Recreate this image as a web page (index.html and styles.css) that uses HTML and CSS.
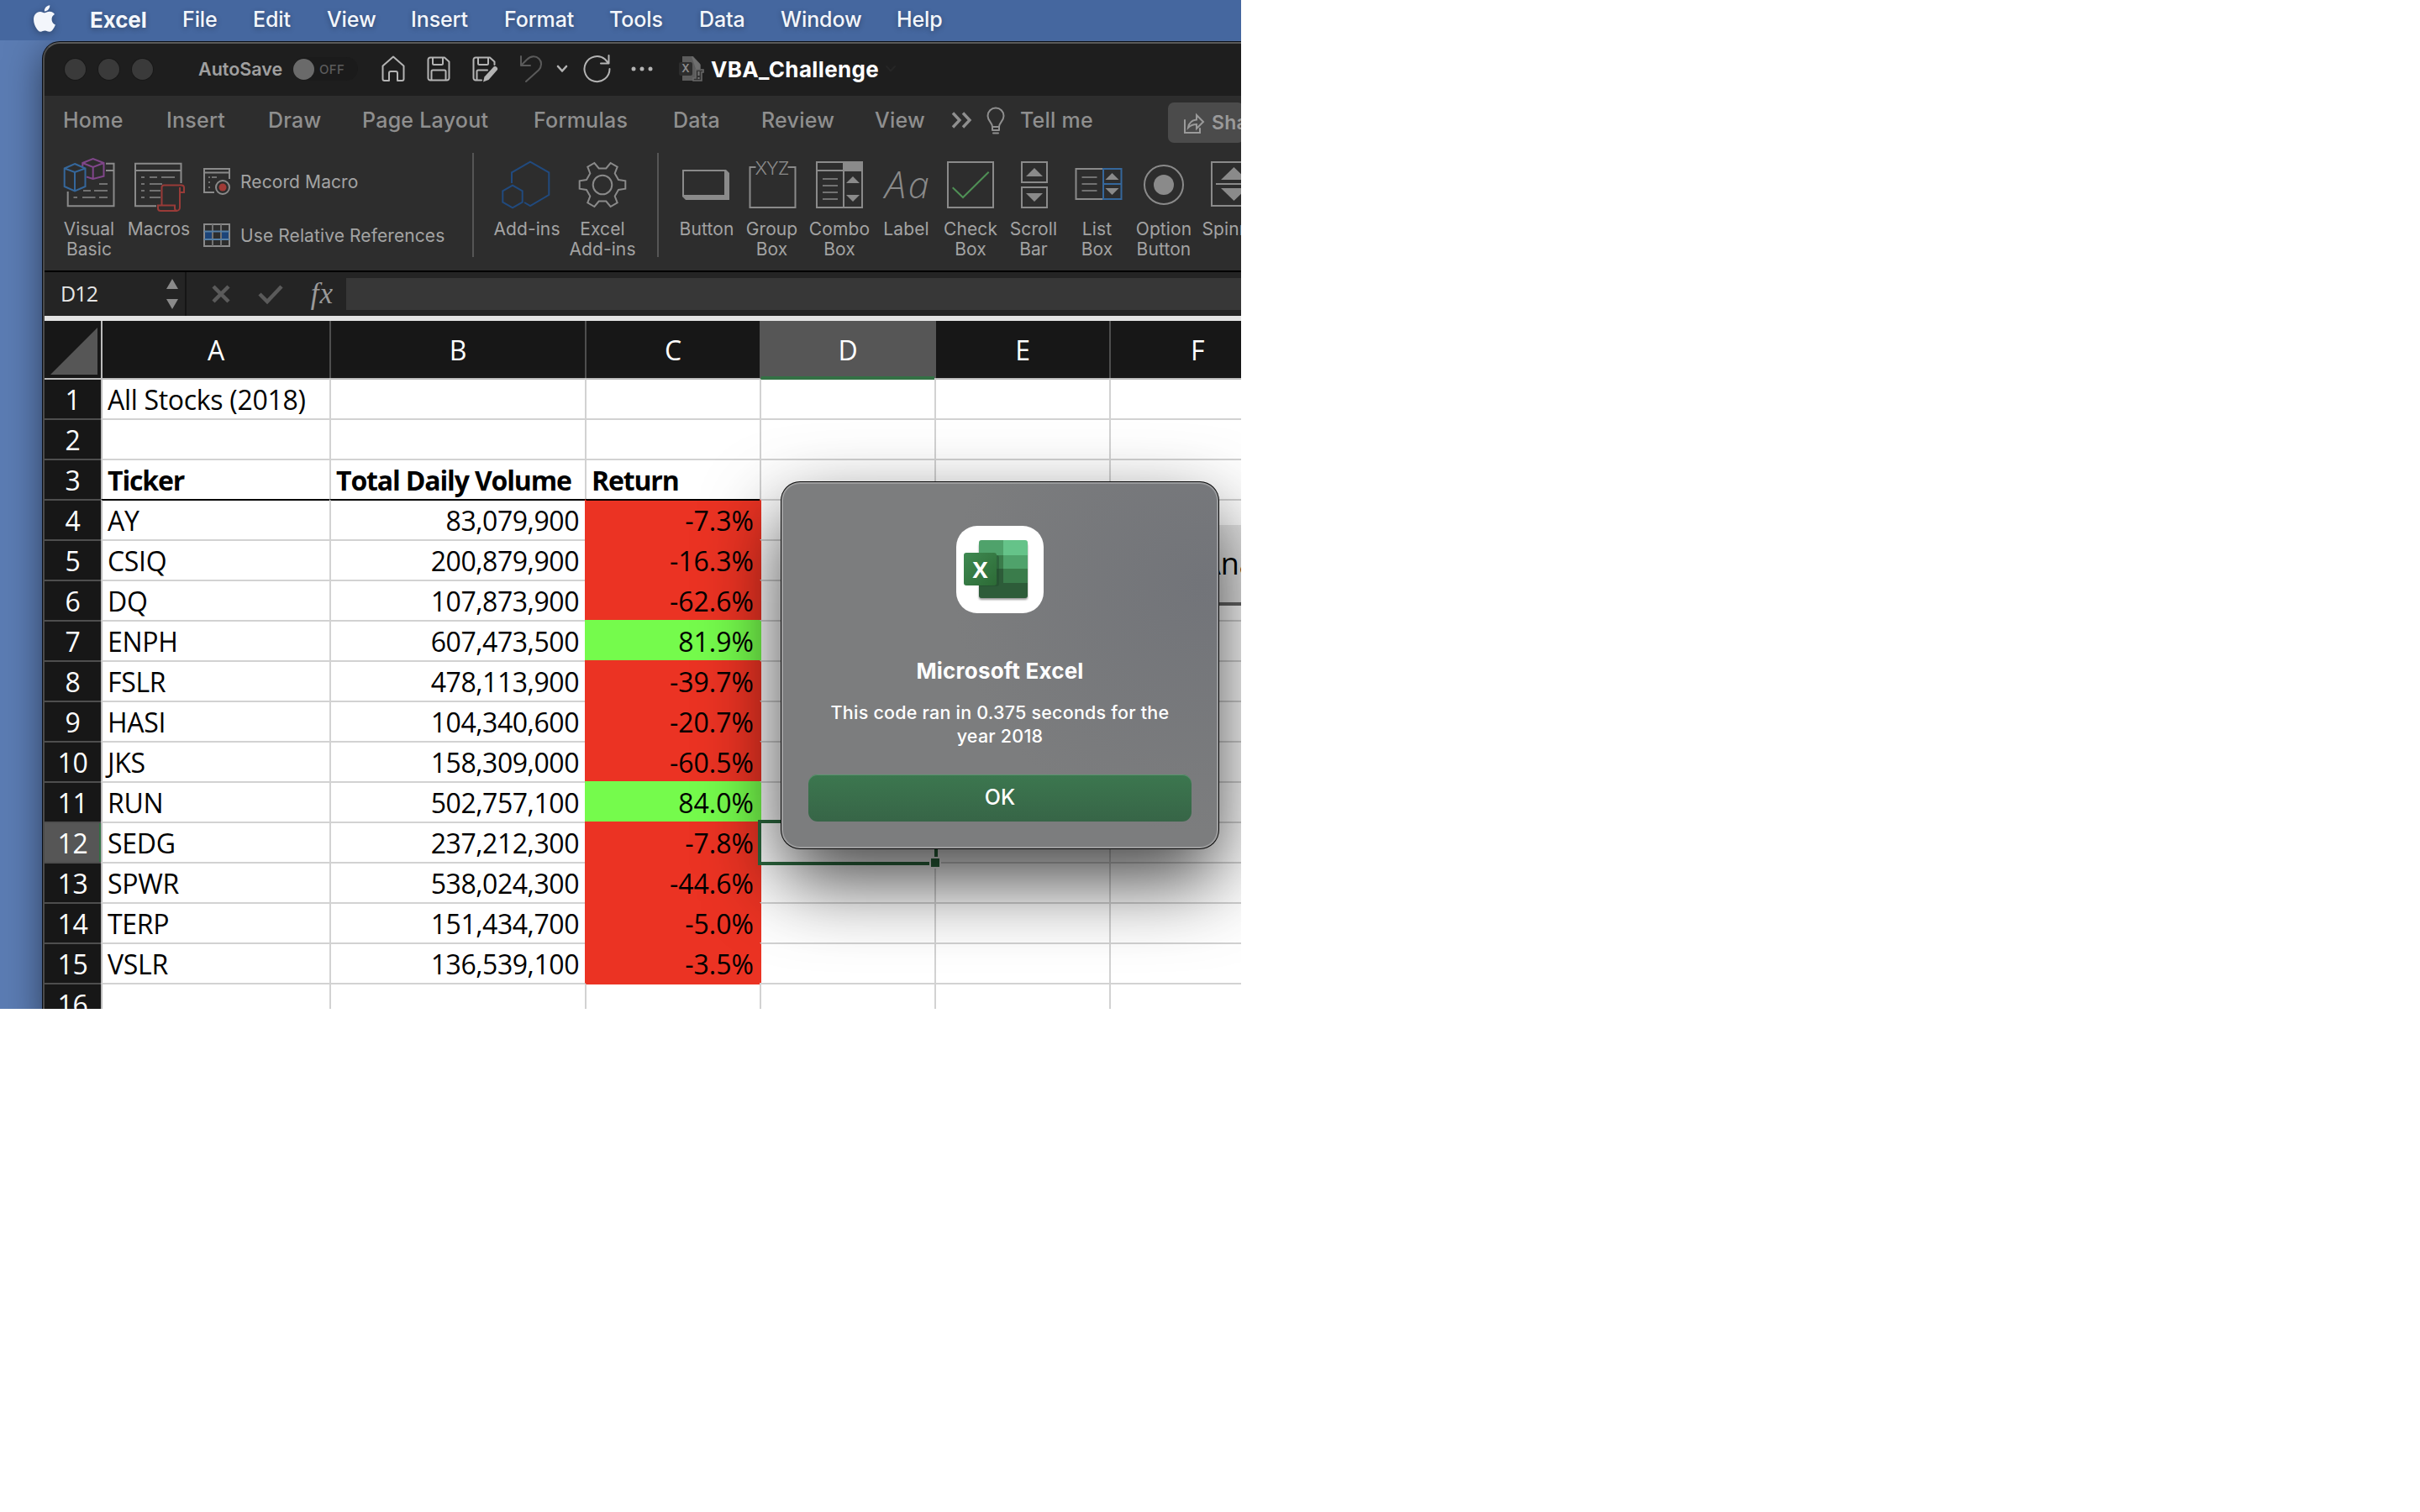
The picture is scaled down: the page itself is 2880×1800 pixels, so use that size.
FILE: index.html
```html
<!DOCTYPE html>
<html lang="en">
<head>
<meta charset="utf-8">
<title>VBA_Challenge</title>
<link rel="stylesheet" href="styles.css">
</head>
<body>
<div class="desktop">
  <nav class="menubar">
    <svg class="apple" viewBox="2.2 0 19.7 24" width="26" height="32"><path d="M12.152 6.896c-.948 0-2.415-1.078-3.96-1.04-2.04.027-3.91 1.183-4.961 3.014-2.117 3.675-.546 9.103 1.519 12.09 1.013 1.454 2.208 3.09 3.792 3.039 1.52-.065 2.09-.987 3.935-.987 1.831 0 2.35.987 3.96.948 1.637-.026 2.676-1.48 3.676-2.948 1.156-1.688 1.636-3.325 1.662-3.415-.039-.013-3.182-1.221-3.22-4.857-.026-3.04 2.48-4.494 2.597-4.559-1.429-2.09-3.623-2.324-4.39-2.376-2-.156-3.675 1.09-4.61 1.09zM15.53 3.83c.843-1.012 1.4-2.427 1.245-3.83-1.207.052-2.662.805-3.532 1.818-.78.896-1.454 2.338-1.273 3.714 1.338.104 2.715-.688 3.559-1.701"/></svg>
    <span class="app">Excel</span><span>File</span><span>Edit</span><span>View</span><span>Insert</span><span>Format</span><span>Tools</span><span>Data</span><span>Window</span><span>Help</span>
  </nav>

  <main class="window">
    <header class="titlebar">
      <div class="lights"><i></i><i></i><i></i></div>
      <span class="autosave">AutoSave</span>
      <div class="toggle"><i></i><span>OFF</span></div>
      <svg class="ic" width="28" height="32" viewBox="0 0 28 32"><path d="M1.5 12.5 14 1.5l12.500 11V28a2 2 0 0 1-2 2H19v-9a2 2 0 0 0-2-2h-6a2 2 0 0 0-2 2v9H3.500a2 2 0 0 1-2-2z"/></svg>
      <svg class="ic" width="28" height="30" viewBox="0 0 28 30"><path d="M4 1.500h17l5.500 5V26a2.500 2.500 0 0 1-2.500 2.500H4A2.500 2.500 0 0 1 1.500 26V4A2.500 2.500 0 0 1 4 1.500zM7 1.500v7a1.500 1.500 0 0 0 1.500 1.500h9A1.500 1.500 0 0 0 19 8.500v-7M5.500 28V18A1.500 1.500 0 0 1 7 16.500h14a1.500 1.500 0 0 1 1.500 1.500v10"/></svg>
      <svg class="ic" width="32" height="30" viewBox="0 0 32 30"><path d="M11 28.500H4A2.500 2.500 0 0 1 1.500 26V4A2.500 2.500 0 0 1 4 1.500h17l5.500 5V10M7 1.500v7a1.500 1.500 0 0 0 1.500 1.500h9A1.500 1.500 0 0 0 19 8.500v-7M5.500 28V18A1.500 1.500 0 0 1 7 16.500h11"/><path class="fill" d="M25.500 12.500c2-1.500 5.500 1 4.500 3.500L19.500 28l-6.500 2.500 1.500-6z"/></svg>
      <svg class="ic dim" width="28" height="34" viewBox="0 0 28 34"><path d="M2 2v11h11M2.500 12.500 9 6c5-5 11-4.500 14.500-1s3.500 9-.5 13.500L8 32"/></svg>
      <svg class="ic thick" width="14" height="12" viewBox="0 0 14 12"><path d="m2 3 5 5.500L12 3"/></svg>
      <svg class="ic" width="34" height="34" viewBox="0 0 34 34"><path d="M31.500 17A15 15 0 1 1 26 5.500l4 4.500M30.500 1v9.500H21"/></svg>
      <svg class="dots" width="26" height="6" viewBox="0 0 26 6"><circle cx="3" cy="3" r="2.500"/><circle cx="13" cy="3" r="2.500"/><circle cx="23" cy="3" r="2.500"/></svg>
      <svg width="32" height="32" viewBox="0 0 32 32"><path fill="#5c5c5c" d="M4 1h12l9 9v20H4z"/><path fill="#7a7a7a" d="M15 1h2l9 10v5h-6z" opacity=".6"/><rect y="8" width="16" height="16" rx="2" fill="#2d2d2d"/><text class="xl-small" x="8" y="20">X</text><path fill="#333" stroke="#6a6a6a" stroke-width="1.500" d="M20 17h9v3h-2v10H17v-3h3z"/><path stroke="#777" stroke-width="2" d="M23.500 19v5m0 2v2"/></svg>
      <h1>VBA_Challenge</h1>
      <svg class="ic faint" width="14" height="12" viewBox="0 0 14 12"><path d="m2 3 5 5.500L12 3"/></svg>
    </header>

    <nav class="tabs">
      <span>Home</span><span>Insert</span><span>Draw</span><span>Page Layout</span><span>Formulas</span><span>Data</span><span>Review</span><span>View</span>
      <svg class="ic more" width="24" height="20" viewBox="0 0 24 20"><path d="m2 1.500 8 8.500-8 8.500M14 1.500l8 8.500-8 8.500"/></svg>
      <svg class="ic bulb" width="22" height="32" viewBox="0 0 22 32"><path d="M7 23c0-5-5.500-7-5.500-13a9.500 9.500 0 0 1 19 0c0 6-5.500 8-5.500 13zM7 23v4h8v-4M8 30.500h6"/></svg>
      <span>Tell me</span>
      <div class="share"><svg class="ic" width="26" height="26" viewBox="0 0 26 26"><path d="M2 9v15h18v-5M6 18c1-6 4-9 10-9.500V3l8 8-8 8v-5c-4 0-7 1-10 4z"/></svg><span>Share</span></div>
    </nav>

    <section class="ribbon">
      <div class="tool"><svg viewBox="0 0 60 64"><path d="M50 6.700h9.500V57.300H4.700V40M50 15h9.500"/><path class="dash" d="M42 31h10M23 39h9m4 0h16M11.500 47h4.500m6 0h15.500m4.500 0h10"/><path class="blue" d="m13 7 12.500 5.500V34L13 39.300.700 34V12.500zM.700 12.500 13 17l12.500-4.500M13 17v22"/><path class="purple" d="M22.300 10V6l12.400-5 12.800 5v15.700L34.700 25 27 22.500M22.300 6l12.400 5 12.800-5M34.700 11v14"/></svg><span>Visual<br>Basic</span></div>
      <div class="tool"><svg viewBox="0 0 60 64"><path d="M56.500 30V6.700H2V57.300h25M2 15h54.500"/><path class="dash" d="M9 23h4m6 0h9m5 0h16M9 31h4m6 0h15M9 39h4m6 0h13M9 47h4m6 0h13"/><path class="red" d="M33.500 56V35a2.500 2.500 0 0 1 2.500-2.500h21a3 3 0 0 1 3 3V41h-5.500M55 35v24a4 4 0 0 1-4 4H32a3 3 0 0 1-3-3v-3.500h20V60a3 3 0 0 0 3 3"/></svg><span>Macros</span></div>
      <div class="pair">
        <div><svg class="small" width="34" height="34" viewBox="0 0 34 34"><path d="M31 13V1H1v28h12M1 5.500h30"/><path class="dash" d="M6 11h2m2 0h6M6 17h2M6 23h2"/><circle cx="23" cy="23" r="8"/><circle class="rec" cx="23" cy="23" r="4.500"/></svg><span>Record Macro</span></div>
        <div><svg class="small" width="34" height="30" viewBox="0 0 34 30"><path class="cells" d="M1 10h10v9H1zM21 10h10v9H21z"/><path d="M1 1h30v26H1z"/><path class="dash" d="M11 1v26M21 1v26"/><path class="steel" d="M1 9.500h30M1 19h30"/></svg><span>Use Relative References</span></div>
      </div>
      <i class="sep"></i>
      <div class="tool"><svg viewBox="0 0 60 64"><path class="navy" d="M12 30V17.300L34 4.700l22.300 12.600V44L34 57l-7-4M13 32.700l11.700 6.600v13.400L13 59.300 1.300 52.700V39.300z"/></svg><span>Add-ins</span></div>
      <div class="tool"><svg viewBox="0 0 60 64"><g transform="translate(30 32)"><circle r="11.300"/><path d="M19-6l8.300 1.300v9.400L19 6 14.700 13.500 17.700 21.300 9.600 26 4.300 19.500H-4.300L-9.600 26-17.700 21.300-14.700 13.500-19 6-27.300 4.700V-4.700L-19-6-14.700-13.500-17.700-21.300-9.600-26-4.300-19.500H4.300L9.600-26 17.700-21.300 14.700-13.500z"/></g></svg><span>Excel<br>Add-ins</span></div>
      <i class="sep inset"></i>
      <div class="tool"><svg viewBox="0 0 60 64"><path d="M2 15h50v30H2z"/><path class="solid" d="M51 14h2l4 4v32H5l-4-4v-2h50z"/></svg><span>Button</span></div>
      <div class="tool"><svg viewBox="0 0 60 64"><path d="M10.500 11H3.500V59h54V11h-9"/><text class="xyz" x="29.500" y="20">XYZ</text></svg><span>Group<br>Box</span></div>
      <div class="tool"><svg viewBox="0 0 60 64"><path d="M3 5h54v54H3zM3 15h54M35 5v54"/><path class="solid" d="M34 4h24v12H34zM46 22l8 8H38zM46 52l8-8H38z"/><path class="dash" d="M10 25h18M10 33h18M10 41h18M10 49h18"/></svg><span>Combo<br>Box</span></div>
      <div class="tool"><svg viewBox="0 0 60 64"><text class="aa" x="4" y="47.500">Aa</text></svg><span>Label</span></div>
      <div class="tool"><svg viewBox="0 0 60 64"><path d="M3 5h54v54H3z"/><path class="green" d="M8.700 35.300 21 47l30.700-30.300"/></svg><span>Check<br>Box</span></div>
      <div class="tool"><svg viewBox="0 0 60 64"><path d="M16 5h30v24H16zM16 35h30v24H16z"/><path class="solid" d="M31 12l10 10H21zM31 52l10-10H21z"/></svg><span>Scroll<br>Bar</span></div>
      <div class="tool"><svg viewBox="0 0 60 64"><path d="M37 13H4.500v36H37"/><path class="dash" d="M11.500 23h18m-18 8h18m-18 8h18"/><path class="blue" d="M37 13h21.500v36H37zM37 31h21.500"/><path class="solid" d="M47.500 18l8 8h-16zM47.500 44l8-8h-16z"/></svg><span>List<br>Box</span></div>
      <div class="tool"><svg viewBox="0 0 60 64"><circle cx="30" cy="32" r="23"/><circle class="solid" cx="30" cy="32" r="12"/></svg><span>Option<br>Button</span></div>
      <div class="tool"><svg viewBox="0 0 60 64"><path d="M3 5h54v52H3zM8 31h44"/><path class="solid" d="M29.500 11l15.500 15H14zM29.500 51l15.500-15H14z"/></svg><span>Spinner</span></div>
    </section>

    <section class="formula">
      <div class="namebox"><span>D12</span><svg width="14" height="38" viewBox="0 0 14 38"><path d="M7 1l7 12H0zM7 37l7-12H0z"/></svg></div>
      <svg class="op" width="22" height="22" viewBox="0 0 22 22"><path d="m2 2 18 18M20 2 2 20"/></svg>
      <svg class="op" width="30" height="24" viewBox="0 0 30 24"><path d="m2 12 9 9L28 3"/></svg>
      <span class="fx">fx</span>
      <div class="input"></div>
    </section>

    <table class="sheet">
      <colgroup><col class="c-row"><col class="c-a"><col class="c-b"><col class="c-n"><col class="c-n"><col class="c-n"><col class="c-n"></colgroup>
      <thead><tr><th class="corner"><svg width="56" height="56" viewBox="0 0 56 56"><path d="M56 0v56H0z"/></svg></th><th>A</th><th>B</th><th>C</th><th class="on">D</th><th>E</th><th>F</th></tr></thead>
      <tbody>
        <tr class="first"><th>1</th><td>All Stocks (2018)</td><td></td><td></td><td></td><td></td><td></td></tr>
        <tr><th>2</th><td></td><td></td><td></td><td></td><td></td><td></td></tr>
        <tr class="labels"><th>3</th><td>Ticker</td><td>Total Daily Volume</td><td>Return</td><td></td><td></td><td></td></tr>
        <tr class="under"><th>4</th><td>AY</td><td class="num">83,079,900</td><td class="num neg">-7.3%</td><td></td><td></td><td></td></tr>
        <tr><th>5</th><td>CSIQ</td><td class="num">200,879,900</td><td class="num neg">-16.3%</td><td></td><td></td><td></td></tr>
        <tr><th>6</th><td>DQ</td><td class="num">107,873,900</td><td class="num neg">-62.6%</td><td></td><td></td><td></td></tr>
        <tr><th>7</th><td>ENPH</td><td class="num">607,473,500</td><td class="num pos">81.9%</td><td></td><td></td><td></td></tr>
        <tr><th>8</th><td>FSLR</td><td class="num">478,113,900</td><td class="num neg">-39.7%</td><td></td><td></td><td></td></tr>
        <tr><th>9</th><td>HASI</td><td class="num">104,340,600</td><td class="num neg">-20.7%</td><td></td><td></td><td></td></tr>
        <tr><th>10</th><td>JKS</td><td class="num">158,309,000</td><td class="num neg">-60.5%</td><td></td><td></td><td></td></tr>
        <tr><th>11</th><td>RUN</td><td class="num">502,757,100</td><td class="num pos">84.0%</td><td></td><td></td><td></td></tr>
        <tr><th class="on">12</th><td>SEDG</td><td class="num">237,212,300</td><td class="num neg">-7.8%</td><td class="active"><i class="cursor"></i></td><td></td><td></td></tr>
        <tr><th>13</th><td>SPWR</td><td class="num">538,024,300</td><td class="num neg">-44.6%</td><td></td><td></td><td></td></tr>
        <tr><th>14</th><td>TERP</td><td class="num">151,434,700</td><td class="num neg">-5.0%</td><td></td><td></td><td></td></tr>
        <tr><th>15</th><td>VSLR</td><td class="num">136,539,100</td><td class="num neg">-3.5%</td><td></td><td></td><td></td></tr>
        <tr class="last"><th>16</th><td></td><td></td><td></td><td></td><td></td><td></td></tr>
      </tbody>
    </table>
  </main>

  <div class="macro-button">Analysis</div>

  <div class="dialog">
    <svg class="logo" width="104" height="104" viewBox="0 0 104 104">
      <defs><linearGradient id="badge" x1="0" y1="0" x2="1" y2="1"><stop offset="0" stop-color="#3f8a52"/><stop offset="1" stop-color="#2c6a35"/></linearGradient></defs>
      <rect width="104" height="104" rx="25" fill="#fff"/>
      <rect x="27" y="19" width="58" height="67" rx="3" fill="#2d5c39" class="book"/>
      <path fill="#4fa26b" d="M30 17h26v18H27V20a3 3 0 0 1 3-3z"/><path fill="#65c389" d="M56 17h26a3 3 0 0 1 3 3v15H56z"/>
      <path fill="#3a7c4b" d="M27 35h29v16H27z"/><path fill="#4fa26b" d="M56 35h29v16H56z"/>
      <path fill="#2d5c39" d="M27 51h29v17H27z"/><path fill="#3a7c4b" d="M56 51h29v17H56z"/>
      <path fill="#1f4a2a" opacity=".45" d="M27 35h21a3 3 0 0 1 3 3v31a3 3 0 0 1-3 3H27z"/>
      <rect x="9" y="32" width="39" height="39" rx="3" fill="url(#badge)"/>
      <text x="28.500" y="62">X</text>
    </svg>
    <h2>Microsoft Excel</h2>
    <p>This code ran in 0.375 seconds for the year 2018</p>
    <button>OK</button>
  </div>
</div>
</body>
</html>
```
FILE: styles.css
```css
* { box-sizing: border-box; }
body { margin: 0; background: #fff; font-family: Inter, "Liberation Sans", sans-serif; }
i { font-style: normal; display: block; }
svg { display: block; overflow: visible; }

.desktop {
  position: relative;
  width: 1477px; height: 1201px;
  overflow: hidden;
  background: #5b7cb3;
}

/* menu bar */
.menubar {
  display: grid;
  grid-template-columns: 67px 110px 84px 88px 100px 111px 125px 107px 97px 138px 100px;
  align-items: center;
  height: 48px;
  padding: 0 0 2px 40px;
  background: #45679f;
  color: #f3f6fb;
  font-size: 25px; font-weight: 500; letter-spacing: -.1px;
  white-space: nowrap;
  text-shadow: 0 2px 6px rgba(0,0,0,.3);
}
.apple { fill: #f3f6fb; filter: drop-shadow(0 2px 4px rgba(0,0,0,.3)); position: relative; top: -1px; }
.app { font-size: 26px; font-weight: 700; }

/* window */
.window {
  width: 1440px;
  margin: 2px 0 0 51px;
  border: 2px solid #5a5a5a;
  border-right: 0;
  border-left-color: #4b4b4b;
  border-radius: 20px 0 0 0;
  background: #1e1e1e;
  box-shadow: 0 0 0 1px #0a0f18, 0 10px 44px rgba(0,0,0,.5);
  clip-path: inset(-2px 0 0 -60px);
}
.titlebar {
  display: grid;
  grid-template-columns: 159px 113px 105px 54px 54px 56px 44px 32px 57px 57px 38px 207px auto;
  align-items: center; justify-items: start;
  height: 62px;
  padding: 0 0 2px 24px;
}
.lights { display: flex; gap: 15px; }
.lights i { width: 25px; height: 25px; border-radius: 50%; background: #3a3a3a; box-shadow: 0 0 0 1px #191919; }
.autosave { font-size: 21.500px; font-weight: 600; color: #a0a0a0; letter-spacing: 0; }
.toggle { display: flex; align-items: center; gap: 6px; width: 77px; height: 28px; border-radius: 14px; background: #1b1b1b; }
.toggle i { width: 25px; height: 25px; border-radius: 50%; background: #6a6a6a; }
.toggle span { font-size: 15px; font-weight: 500; color: #5b5b5b; letter-spacing: .3px; }
.ic { fill: none; stroke: #b4b4b4; stroke-width: 2; stroke-linejoin: round; stroke-linecap: round; }
.ic .fill { fill: #b4b4b4; stroke: none; }
.ic.dim { stroke: #5a5a5a; }
.ic.thick { stroke-width: 2.600; }
.ic.faint { stroke: #262626; }
.dots { fill: #b4b4b4; }
.xl-small { font: 600 13px Inter, sans-serif; fill: #8c8c8c; text-anchor: middle; }
h1 { margin: 0; font-size: 26px; font-weight: 700; color: #fff; letter-spacing: .35px; }

.tabs {
  display: grid;
  grid-template-columns: 123px 121px 112px 204px 166px 105px 135px 91px 42px 40px 176px 90px;
  align-items: start;
  height: 68px;
  padding: 8px 0 0 22px;
  background: #2d2d2d;
  color: #8f8f8f;
  font-size: 25px; font-weight: 500; line-height: 43px; letter-spacing: .25px;
  white-space: nowrap;
}
.tabs .ic { stroke: #8f8f8f; }
.tabs .more { stroke-width: 3.400; margin-top: 11px; stroke-linecap: butt; stroke-linejoin: miter; }
.tabs .bulb { margin-top: 6px; }
.share { display: flex; align-items: center; gap: 8px; height: 48px; padding: 1px 0 0 18px; border-radius: 7px; background: #4b4b4b; font-size: 23px; font-weight: 600; color: #9a9a9a; }
.share .ic { stroke-linejoin: miter; stroke: #9a9a9a; }

/* ribbon */
.ribbon {
  display: grid;
  grid-template-columns: 80px 86px 330px 25px 80px 100px 35px 78px 77px 84px 75px 78px 72px 79px 80px 88px;
  align-items: start;
  height: 140px;
  padding: 6px 0 0 13px;
  background: #2d2d2d;
  color: #a3a3a3;
  font-size: 21px; letter-spacing: .1px; line-height: 24px;
}
.tool { display: flex; flex-direction: column; align-items: center; gap: 9px; text-align: center; white-space: nowrap; }
.tool svg { width: 60px; height: 64px; }
.tool svg, .small { fill: none; stroke: #8a8a8a; stroke-width: 2; }
.sep { width: 2px; height: 124px; margin-top: -6px; background: #555; }
.sep.inset { margin-left: 15px; }
.ribbon .dash { stroke: #727272; }
.ribbon .solid { fill: #8a8a8a; stroke: none; }
.ribbon .blue { stroke: #35679b; }
.ribbon .navy { stroke: #214a7e; }
.ribbon .purple { stroke: #80468a; }
.ribbon .red { stroke: #993b38; }
.ribbon .green { stroke: #4f8f55; }
.ribbon .steel { stroke: #557fa6; }
.ribbon .rec { fill: #a03a36; stroke: none; }
.ribbon .cells { fill: #1c4479; stroke: none; }
.ribbon .xyz { font: 300 22px Inter, sans-serif; fill: #8a8a8a; stroke: none; text-anchor: middle; letter-spacing: -1px; }
.ribbon .aa { font: italic 300 45px "Open Sans", sans-serif; fill: #8a8a8a; stroke: none; letter-spacing: 3px; }
.pair { display: grid; grid-template-rows: 64px 64px; padding: 13px 0 0 10px; align-items: start; }
.pair div { display: flex; align-items: center; gap: 10px; height: 32px; white-space: nowrap; }

/* formula bar */
.formula {
  display: grid;
  grid-template-columns: 169px 52px 63px 60px 1fr;
  align-items: center;
  height: 60px;
  border-top: 2px solid #000;
  border-bottom: 6px solid #e4e4e4;
  background: #242424;
}
.namebox { display: flex; justify-content: space-between; align-items: center; height: 52px; padding: 0 8px 2px 19px; border-right: 2px solid #151515; color: #e6e6e6; font: 25px "Open Sans", sans-serif; letter-spacing: -.9px; }
.namebox svg { fill: #8a8a8a; position: relative; top: 1px; }
.op { fill: none; stroke: #5a5a5a; stroke-width: 4.500; justify-self: end; }
.fx { justify-self: end; font: italic 35px "Liberation Serif", serif; color: #9a9a9a; letter-spacing: 1px; line-height: 52px; }
.input { margin-left: 15px; height: 38px; background: #373737; }

/* worksheet */
.sheet { table-layout: fixed; width: 1475px; border-collapse: separate; border-spacing: 0; background: #fff; font: 32px/44px "Open Sans", sans-serif; color: #000; letter-spacing: -.3px; }
.c-row { width: 67px; } .c-a { width: 272px; } .c-b { width: 304px; } .c-n { width: 208px; }
.sheet th { padding: 2px 0 0; background: #171717; color: #fff; font-weight: 500; text-align: center; }
.sheet thead th { height: 68px; border-left: 2px solid #4e4e4e; }
.sheet thead th.corner { border-left: 0; }
.sheet thead th.corner + th { border-left-color: #bcbcbc; }
.corner svg { fill: #565656; margin: 2px 0 0 7px; }
.sheet thead th.on { background: #565656; border-left-color: #565656; box-shadow: inset 0 -2px 0 #337145, 2px 0 0 #565656; }
.sheet thead th.on + th { border-left-color: #565656; }
.sheet tbody th { border-top: 2px solid #4e4e4e; }
.sheet tbody th.on { background: #565656; box-shadow: inset -2px 0 0 #337145; }
.sheet td { height: 48px; padding: 2px 0 0 6px; border-top: 2px solid #d2d2d2; border-left: 2px solid #d2d2d2; font-weight: 500; white-space: nowrap; }
.sheet td:nth-child(2) { border-left-color: #bcbcbc; }
.sheet .first th, .sheet .first td { border-top-color: #bcbcbc; }
.sheet .first td:nth-child(5) { border-top-color: #337145; }
.sheet .num { padding: 2px 7px 0 0; text-align: right; letter-spacing: -.45px; }
.sheet .neg, .sheet .pos { letter-spacing: 0; }
.sheet .labels td { font-weight: 700; letter-spacing: -1.150px; }
.sheet .neg { background: #eb3323; border-color: #eb3323; }
.sheet .pos { background: #75fb4c; border-color: #75fb4c; }
.sheet .neg + td { border-left-color: #eb3323; }
.sheet .pos + td { border-left-color: #75fb4c; }
.sheet .under td:nth-child(-n+4) { border-top-color: #000; }
.sheet .last td:nth-child(4) { border-top-color: #eb3323; }
.sheet td.active { position: relative; padding: 0; }
.cursor { position: absolute; left: -4px; top: -4px; width: 214px; height: 54px; border: 4px solid #2c6a3f; }
.cursor::after { content: ""; position: absolute; right: -6px; bottom: -6px; width: 10px; height: 10px; background: #2c6a3f; box-shadow: 0 0 0 2px #fff; }

/* worksheet button partly hidden by the alert */
.macro-button { position: absolute; left: 1340px; top: 625px; width: 300px; height: 96px; padding-left: 90px; background: #e6e6e6; border-bottom: 4px solid #666; font: 500 36px/92px "Open Sans", sans-serif; color: #000; }

/* alert */
.dialog {
  position: absolute; left: 930px; top: 574px;
  display: flex; flex-direction: column; align-items: center;
  width: 520px; height: 436px;
  padding: 52px 32px 0;
  border-radius: 22px;
  background: radial-gradient(circle at 96% 28%, #727479, rgba(114,116,121,0) 50%), #7c7d7e;
  box-shadow: inset 0 0 0 2px rgba(255,255,255,.25), 0 0 0 1px #0c0c0c, 0 38px 92px rgba(0,0,0,.74);
  color: #fff; text-align: center;
}
.logo text { font: 700 27px "Open Sans", sans-serif; fill: #fff; text-anchor: middle; }
.book { filter: drop-shadow(0 2px 1px rgba(0,0,0,.4)); }
.dialog h2 { margin: 53px 0 0; font-size: 26px; line-height: 32px; font-weight: 700; letter-spacing: .2px; }
.dialog p { width: 430px; padding: 0 10px; margin: 19px 0 0; font-size: 21.500px; font-weight: 500; line-height: 28px; letter-spacing: .22px; }
.dialog button { width: 456px; height: 56px; margin-top: 32px; padding: 0 0 2px; border: 0; border-radius: 11px; background: linear-gradient(#3c774f, #376547); box-shadow: inset 0 1px 0 #5c9470; color: #fff; font: 500 25px Inter, sans-serif; }
```
